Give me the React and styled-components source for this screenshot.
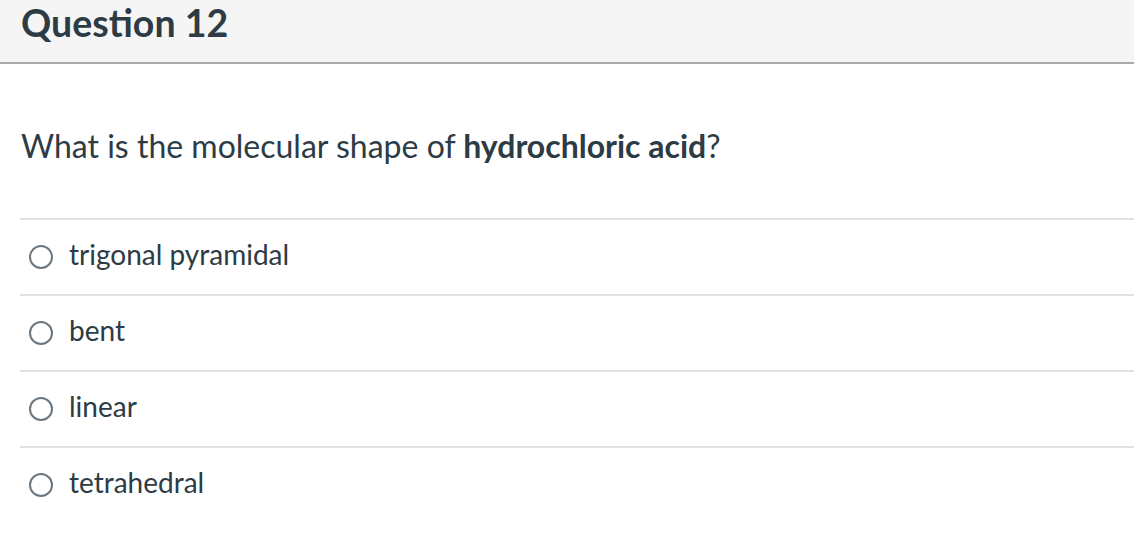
import React from "react";
import styled, { createGlobalStyle } from "styled-components";

const Global = createGlobalStyle`
  html, body { margin: 0; padding: 0; background: #fff; }
  body { font-family: Lato, "Noto Sans", sans-serif; color: #2d3b45; }
`;

const Page = styled.div`
  width: 1134px;
  height: 534px;
  overflow: hidden;
  display: flex;
  flex-direction: column;
`;

const Header = styled.div`
  height: 62px;
  background: #f5f5f5;
  border-bottom: 2px solid #aaaaaa;
  display: flex;
  align-items: flex-start;
  padding-left: 21px;
  box-sizing: content-box;
`;

const Title = styled.h2`
  margin: 0;
  font-family: Lato, sans-serif;
  font-weight: 700;
  font-size: 37.5px;
  line-height: 45px;
  color: #2d3b45;
`;

const Body = styled.div`
  padding: 0 0 0 20px;
`;

const QuestionText = styled.p`
  margin: 0;
  padding: 64px 0 0 1px;
  height: 154px;
  box-sizing: border-box;
  font-size: 32px;
  line-height: 36px;
  color: #2d3b45;
  strong { font-weight: 700; }
`;

const Answers = styled.div`
  display: flex;
  flex-direction: column;
`;

const Row = styled.label`
  height: 76px;
  border-top: 2px solid #e0e0e0;
  box-sizing: border-box;
  display: flex;
  align-items: center;
  gap: 16px;
  padding-left: 9px;
  font-size: 28px;
  color: #2d3b45;
`;

const Radio = styled.span`
  width: 24px;
  height: 24px;
  border: 2px solid #6b7780;
  border-radius: 50%;
  box-sizing: border-box;
  flex: none;
`;

const AnswerText = styled.span`
  line-height: 34px;
  padding-bottom: 7px;
`;

const answers = ["trigonal pyramidal", "bent", "linear", "tetrahedral"];

export default function App() {
  return (
    <>
      <Global />
      <Page>
        <Header>
          <Title>Question 12</Title>
        </Header>
        <Body>
          <QuestionText>
            What is the molecular shape of <strong>hydrochloric acid</strong>?
          </QuestionText>
          <Answers>
            {answers.map((a) => (
              <Row key={a}>
                <Radio />
                <AnswerText>{a}</AnswerText>
              </Row>
            ))}
          </Answers>
        </Body>
      </Page>
    </>
  );
}
